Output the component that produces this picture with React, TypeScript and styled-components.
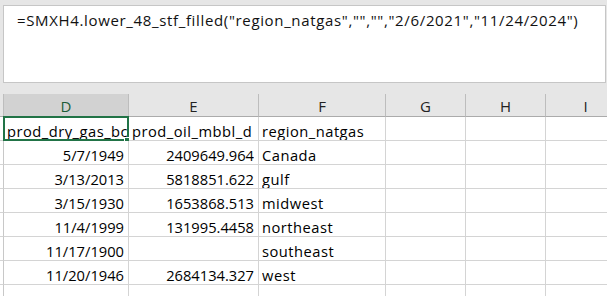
import styled, { createGlobalStyle } from "styled-components";

const GlobalStyle = createGlobalStyle`
  html, body {
    margin: 0;
    padding: 0;
    background: #e6e6e6;
    overflow: hidden;
  }
  body {
    font-family: "Open Sans", "Liberation Sans", sans-serif;
    font-size: 14.7px;
    color: #000;
  }
`;

const columns = [
  { name: "D", width: 125 },
  { name: "E", width: 130 },
  { name: "F", width: 127 },
  { name: "G", width: 80 },
  { name: "H", width: 80 },
  { name: "I", width: 80 },
];

type Cell = { text: string; numeric?: boolean };

const rows: Cell[][] = [
  [{ text: "prod_dry_gas_bcf_d" }, { text: "prod_oil_mbbl_d" }, { text: "region_natgas" }],
  [{ text: "5/7/1949", numeric: true }, { text: "2409649.964", numeric: true }, { text: "Canada" }],
  [{ text: "3/13/2013", numeric: true }, { text: "5818851.622", numeric: true }, { text: "gulf" }],
  [{ text: "3/15/1930", numeric: true }, { text: "1653868.513", numeric: true }, { text: "midwest" }],
  [{ text: "11/4/1999", numeric: true }, { text: "131995.4458", numeric: true }, { text: "northeast" }],
  [{ text: "11/17/1900", numeric: true }, { text: "" }, { text: "southeast" }],
  [{ text: "11/20/1946", numeric: true }, { text: "2684134.327", numeric: true }, { text: "west" }],
  [],
];

const formula =
  '=SMXH4.lower_48_stf_filled("region_natgas","","","2/6/2021","11/24/2024")';

export default function App() {
  const template = `4px ${columns.map((c) => `${c.width}px`).join(" ")}`;
  return (
    <>
      <GlobalStyle />
      <Window>
        <FormulaBar>
          <FormulaText>{formula}</FormulaText>
        </FormulaBar>
        <Sheet style={{ gridTemplateColumns: template }}>
          <Corner />
          {columns.map((c, i) => (
            <ColHeader key={c.name} $selected={i === 0}>
              {c.name}
            </ColHeader>
          ))}
          {rows.map((row, r) => (
            <Row key={r}>
              <RowHeader />
              {columns.map((c, ci) => {
                const cell = row[ci];
                return (
                  <DataCell key={c.name} $numeric={cell?.numeric}>
                    <CellText $numeric={cell?.numeric}>{cell?.text ?? ""}</CellText>
                    {r === 0 && ci === 0 && (
                      <>
                        <Selection />
                        <FillHandle />
                      </>
                    )}
                  </DataCell>
                );
              })}
            </Row>
          ))}
        </Sheet>
      </Window>
    </>
  );
}

const Window = styled.div`
  width: 607px;
  height: 296px;
  overflow: hidden;
  display: flex;
  flex-direction: column;
`;

const FormulaBar = styled.div`
  margin: 5px 0 11px 3px;
  width: 601px;
  height: 76px;
  flex-shrink: 0;
  background: #fff;
  border: 1px solid #c6c6c6;
`;

const FormulaText = styled.div`
  padding: 5px 0 0 13px;
  font-size: 15px;
  letter-spacing: 0.65px;
  line-height: 18px;
  white-space: nowrap;
  color: #111;
`;

const Sheet = styled.div`
  display: grid;
  grid-auto-rows: 24px;
  grid-template-rows: 23px;
  width: max-content;
`;

const Row = styled.div`
  display: contents;
`;

const Corner = styled.div`
  background: #e6e6e6;
  border-right: 1px solid #bdbdbd;
  border-bottom: 1px solid #ababab;
`;

const ColHeader = styled.div<{ $selected?: boolean }>`
  display: flex;
  align-items: flex-end;
  justify-content: center;
  line-height: 18px;
  padding-bottom: 1px;
  font-size: 15px;
  background: ${({ $selected }) => ($selected ? "#d2d2d2" : "#e6e6e6")};
  border-right: 1px solid #bdbdbd;
  border-bottom: 1px solid #ababab;
  color: ${({ $selected }) => ($selected ? "#1d5c38" : "#222")};
`;

const RowHeader = styled.div`
  background: #fff;
  border-right: 1px solid #c8c8c8;
  border-bottom: 1px solid #d4d4d4;
`;

const DataCell = styled.div<{ $numeric?: boolean }>`
  position: relative;
  display: flex;
  align-items: flex-end;
  justify-content: ${({ $numeric }) => ($numeric ? "flex-end" : "flex-start")};
  padding: 0 ${({ $numeric }) => ($numeric ? "4px" : "0")} 0
    ${({ $numeric }) => ($numeric ? "0" : "3px")};
  background: #fff;
  border-right: 1px solid #d4d4d4;
  border-bottom: 1px solid #d4d4d4;
  min-width: 0;
`;

const CellText = styled.span<{ $numeric?: boolean }>`
  display: block;
  line-height: 18px;
  letter-spacing: ${({ $numeric }) => ($numeric ? "0" : "0.5px")};
  white-space: nowrap;
  overflow: hidden;
  max-width: 100%;
`;

const Selection = styled.div`
  position: absolute;
  left: -1px;
  top: -1px;
  right: -1px;
  bottom: -1px;
  border: 2px solid #217346;
  pointer-events: none;
`;

const FillHandle = styled.div`
  position: absolute;
  right: -3px;
  bottom: -4px;
  width: 5px;
  height: 5px;
  background: #217346;
  border: 1px solid #fff;
`;
